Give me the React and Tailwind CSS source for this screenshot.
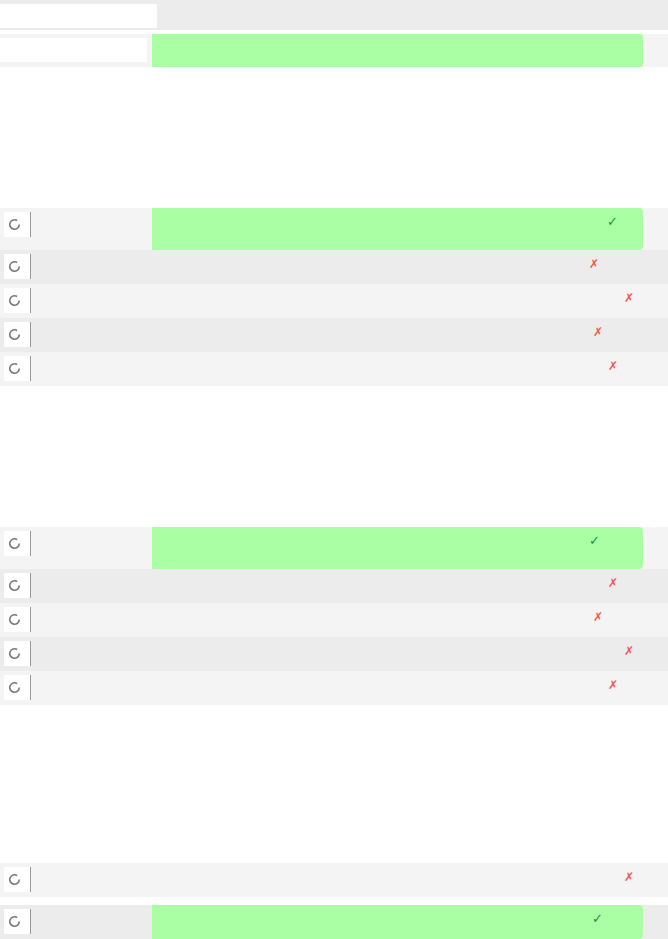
const blocks = [
    {
        top: 'mt-[141px]',
        rows: [
            { correct: true, mark: 'ml-[455px]', bg: 'bg-[#f4f4f4]' },
            { mark: 'ml-[437px]', bg: 'bg-[#ececec]' },
            { mark: 'ml-[472px]', bg: 'bg-[#f4f4f4]' },
            { mark: 'ml-[441px]', bg: 'bg-[#ececec]' },
            { mark: 'ml-[456px]', bg: 'bg-[#f4f4f4]' },
        ],
    },
    {
        top: 'mt-[141px]',
        rows: [
            { correct: true, mark: 'ml-[437px]', bg: 'bg-[#f4f4f4]' },
            { mark: 'ml-[456px]', bg: 'bg-[#ececec]' },
            { mark: 'ml-[441px]', bg: 'bg-[#f4f4f4]' },
            { mark: 'ml-[472px]', bg: 'bg-[#ececec]' },
            { mark: 'ml-[456px]', bg: 'bg-[#f4f4f4]' },
        ],
    },
];

const Radio = () => (
    <div className="w-[27px] h-[25px] bg-white flex items-center pl-[4px] border-r border-[#9a9a9a] shrink-0">
        <svg width="13" height="13" viewBox="0 0 12 12">
            <path d="M8.4 2.3 A4.4 4.4 0 1 0 10.4 6" fill="none" stroke="#7a7a7a" strokeWidth="1.5" />
        </svg>
    </div>
);

const Mark = ({ correct }) =>
    correct ? (
        <span className="text-[13px] leading-none text-[#1f8f3a]">✓</span>
    ) : (
        <span className="text-[12px] leading-none text-[#f0584a]">✗</span>
    );

const Row = ({ correct, mark, bg, tall }) => (
    <div className={`flex items-stretch ${bg} ${tall ? 'h-[42px]' : 'h-[34px]'}`}>
        <div className="w-[152px] pl-[4px] pt-[4px] shrink-0">
            <Radio />
        </div>
        <div className={`w-[491px] flex items-start pt-[1px] ${correct ? 'bg-[#aaffa5] rounded-r-[4px]' : ''}`}>
            <div className={mark}>
                <Mark correct={correct} />
            </div>
        </div>
    </div>
);

const App = () => {
    return (
        <div className="w-[668px] h-[939px] bg-white overflow-hidden" style={{ fontFamily: '"DejaVu Sans", sans-serif' }}>
            <div className="h-[30px] bg-[#ececec] pt-[4px]">
                <div className="w-[157px] h-[24px] bg-white"></div>
            </div>
            <div className="h-[33px] mt-[4px] bg-[#f4f4f4] flex">
                <div className="w-[152px] pt-[4px]">
                    <div className="w-[147px] h-[24px] bg-white"></div>
                </div>
                <div className="w-[491px] bg-[#aaffa5] rounded-r-[3px]"></div>
            </div>

            {blocks.map((block, i) => (
                <div key={i} className={block.top}>
                    {block.rows.map((r, j) => (
                        <Row key={j} {...r} tall={j === 0} />
                    ))}
                </div>
            ))}

            <div className="mt-[158px]">
                <Row mark="ml-[472px]" bg="bg-[#f4f4f4]" />
                <div className="h-[8px]"></div>
                <Row correct mark="ml-[440px]" bg="bg-[#ececec]" />
            </div>
        </div>
    );
};

export default App;
